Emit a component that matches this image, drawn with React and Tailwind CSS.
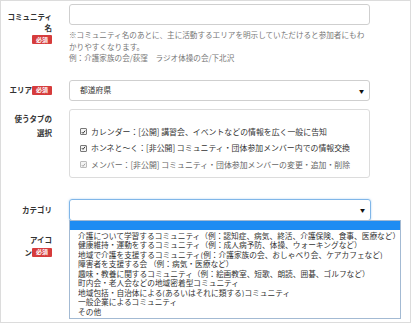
import React from "react";

const jp = { fontFamily: '"Noto Sans CJK JP", "Noto Sans", sans-serif' };

function Badge() {
  return (
    <span className="inline-flex items-center justify-center w-[20px] h-[9px] bg-[#d63c3c] text-white text-[6px] font-bold leading-none rounded-[1px] align-middle">
      必須
    </span>
  );
}

function Check({ light }) {
  return (
    <span
      className={`inline-flex items-center justify-center w-[7px] h-[7px] border rounded-[1px] mr-[4px] ${
        light ? "border-[#bbb] bg-[#f4f4f4]" : "border-[#777] bg-[#f4f4f4]"
      }`}
    >
      <svg width="6" height="6" viewBox="0 0 6 6">
        <path d="M1 3.2 L2.4 4.6 L5 1.4" fill="none" stroke={light ? "#999" : "#222"} strokeWidth="1.1" />
      </svg>
    </span>
  );
}

function Arrow() {
  return <span className="text-[5px] text-[#111] leading-none">▼</span>;
}

const options = [
  "介護について学習するコミュニティ（例：認知症、病気、終活、介護保険、食事、医療など）",
  "健康維持・運動をするコミュニティ（例：成人病予防、体操、ウォーキングなど）",
  "地域で介護を支援するコミュニティ(例：介護家族の会、おしゃべり会、ケアカフェなど)",
  "障害者を支援する会 （例：病気・医療など）",
  "趣味・教養に関するコミュニティ（例：絵画教室、短歌、朗読、囲碁、ゴルフなど）",
  "町内会・老人会などの地域密着型コミュニティ",
  "地域包括・自治体による(あるいはそれに類する)コミュニティ",
  "一般企業によるコミュニティ",
  "その他",
];

export default function App() {
  return (
    <div className="w-[418px] h-[324px] bg-white overflow-hidden" style={jp}>
      <div className="relative w-[411px] h-[323px] border border-[#dcdcdc] text-[#333]">
        {/* Row 1 */}
        <div className="flex pt-[3px]">
          <div className="w-[51px] shrink-0 text-right pt-[7px] text-[7.5px] leading-[11px] font-bold">
            <div>コミュニティ</div>
            <div>名</div>
            <div className="mt-[2px] leading-none">
              <Badge />
            </div>
          </div>
          <div className="ml-[17px] w-[301px]">
            <div className="h-[21px] border border-[#cfcfcf] rounded-[3px] bg-white" />
            <div className="mt-[4px] text-[7.6px] leading-[11.5px] text-[#777]">
              <div>※コミュニティ名のあとに、主に活動するエリアを明示していただけると参加者にもわかりやすくなります。</div>
              <div>例：介護家族の会/荻窪　ラジオ体操の会/下北沢</div>
            </div>
          </div>
        </div>

        {/* Row 2 */}
        <div className="flex mt-[16px]">
          <div className="w-[51px] shrink-0 flex items-center justify-end text-[7.5px] font-bold">
            <span>エリア</span>
            <Badge />
          </div>
          <div className="ml-[17px] w-[301px] h-[21px] border border-[#cfcfcf] rounded-[3px] flex items-center justify-between pl-[10px] pr-[5px] text-[7.8px]">
            <span>都道府県</span>
            <Arrow />
          </div>
        </div>

        {/* Row 3 */}
        <div className="flex mt-[8px]">
          <div className="w-[51px] shrink-0 text-right pt-[3px] text-[7.5px] leading-[14px] font-bold">
            <div>使うタブの</div>
            <div>選択</div>
          </div>
          <div className="ml-[17px] w-[301px] h-[69px] border border-[#dcdcdc] rounded-[3px] pl-[10px] pt-[14px] text-[7.9px] leading-[16.5px]">
            <div className="flex items-center">
              <Check />
              <span>カレンダー：[公開] 講習会、イベントなどの情報を広く一般に告知</span>
            </div>
            <div className="flex items-center">
              <Check />
              <span>ホンネと〜く：[非公開] コミュニティ・団体参加メンバー内での情報交換</span>
            </div>
            <div className="flex items-center text-[#666]">
              <Check light />
              <span>メンバー：[非公開] コミュニティ・団体参加メンバーの変更・追加・削除</span>
            </div>
          </div>
        </div>

        {/* Row 4 */}
        <div className="flex mt-[21px]">
          <div className="w-[51px] shrink-0 flex items-center justify-end text-[7.5px] font-bold">
            カテゴリ
          </div>
          <div className="ml-[17px] w-[302px] h-[22px] border border-[#80b6e8] rounded-[3px] shadow-[0_0_2px_rgba(102,175,233,0.6)] flex items-center justify-end pr-[5px]">
            <Arrow />
          </div>
        </div>

        {/* Row 5 */}
        <div className="flex mt-[12px]">
          <div className="w-[51px] shrink-0 text-right text-[7.5px] leading-[13px] font-bold">
            <div>アイコ</div>
            <div className="flex items-center justify-end">
              <span>ン</span>
              <Badge />
            </div>
          </div>
        </div>

        {/* Dropdown list */}
        <div className="absolute left-[68px] top-[219px] w-[332px] h-[99px] border border-[#a3bad3] bg-white text-[7.7px] text-[#333]">
          <div className="h-[9px] bg-[#1e8cf2]" />
          <div className="pl-[8px] pt-[1px] whitespace-nowrap">
            {options.map((o) => (
              <div key={o} className="h-[9.45px] leading-[9.45px] overflow-hidden">
                {o}
              </div>
            ))}
          </div>
        </div>
      </div>
    </div>
  );
}
